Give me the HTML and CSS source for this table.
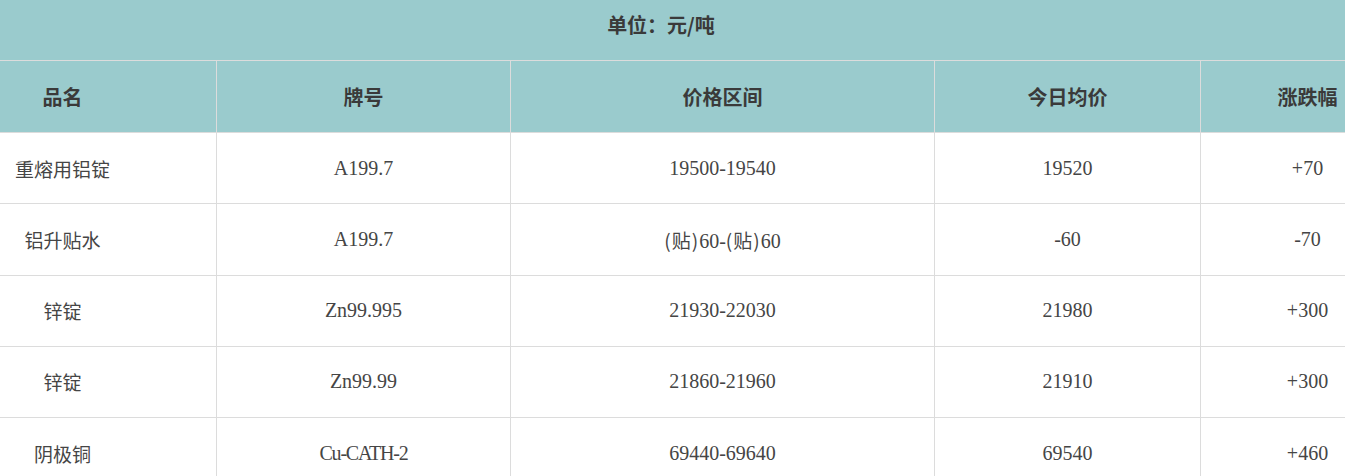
FILE: index.html
```html
<!DOCTYPE html>
<html lang="zh-CN">
<head>
<meta charset="utf-8">
<title>价格表</title>
<link rel="stylesheet" href="styles.css">
</head>
<body>
<div class="viewport">
  <div class="sheet">
    <div class="unit">单位：元/吨</div>
    <table class="price-table">
      <colgroup>
        <col class="c1"><col class="c2"><col class="c3"><col class="c4"><col class="c5">
      </colgroup>
      <thead>
        <tr><th>品名</th><th>牌号</th><th>价格区间</th><th>今日均价</th><th>涨跌幅</th></tr>
      </thead>
      <tbody>
        <tr><td class="zh">重熔用铝锭</td><td>A199.7</td><td>19500-19540</td><td>19520</td><td>+70</td></tr>
        <tr><td class="zh">铝升贴水</td><td>A199.7</td><td><span class="zhi">(贴)</span>60-<span class="zhi">(贴)</span>60</td><td>-60</td><td>-70</td></tr>
        <tr><td class="zh">锌锭</td><td>Zn99.995</td><td>21930-22030</td><td>21980</td><td>+300</td></tr>
        <tr><td class="zh">锌锭</td><td>Zn99.99</td><td>21860-21960</td><td>21910</td><td>+300</td></tr>
        <tr><td class="zh">阴极铜</td><td class="code">Cu-CATH-2</td><td>69440-69640</td><td>69540</td><td>+460</td></tr>
      </tbody>
    </table>
  </div>
</div>
</body>
</html>
```
FILE: styles.css
```css
html, body {
  margin: 0;
  padding: 0;
  background: #ffffff;
  overflow: hidden;
}
.viewport {
  width: 1345px;
  overflow: hidden;
}
.sheet {
  width: 1506px;
  margin-left: -92px;
}
.unit {
  height: 50px;
  line-height: 50px;
  padding-bottom: 10px;
  background: #9acbcd;
  text-align: center;
  font-family: "Noto Sans CJK SC", sans-serif;
  font-size: 20px;
  font-weight: 600;
  color: #3a3a3a;
  border-bottom: 1px solid #dcdcdc;
}
.price-table {
  width: 1506px;
  table-layout: fixed;
  border-collapse: collapse;
}
.c1 { width: 308px; }
.c2 { width: 294px; }
.c3 { width: 424px; }
.c4 { width: 266px; }
.c5 { width: 214px; }
.price-table th,
.price-table td {
  border: 1px solid #dcdcdc;
  text-align: center;
  padding: 0;
  vertical-align: middle;
}
.price-table tr:first-child th { border-top: none; }
.price-table th {
  height: 71px;
  background: #9acbcd;
  font-family: "Noto Sans CJK SC", sans-serif;
  font-size: 20px;
  font-weight: 600;
  color: #3a3a3a;
}
.price-table td {
  height: 70.25px;
  font-family: "Liberation Serif", "Noto Sans CJK SC", serif;
  font-size: 20px;
  color: #454545;
}
.price-table td.code {
  letter-spacing: -1.2px;
}
.price-table td.zh {
  font-family: "Noto Sans CJK SC", sans-serif;
  font-size: 19px;
}
.price-table td .zhi {
  font-family: "Noto Sans CJK SC", sans-serif;
  font-size: 19px;
  letter-spacing: 1px;
}
```
